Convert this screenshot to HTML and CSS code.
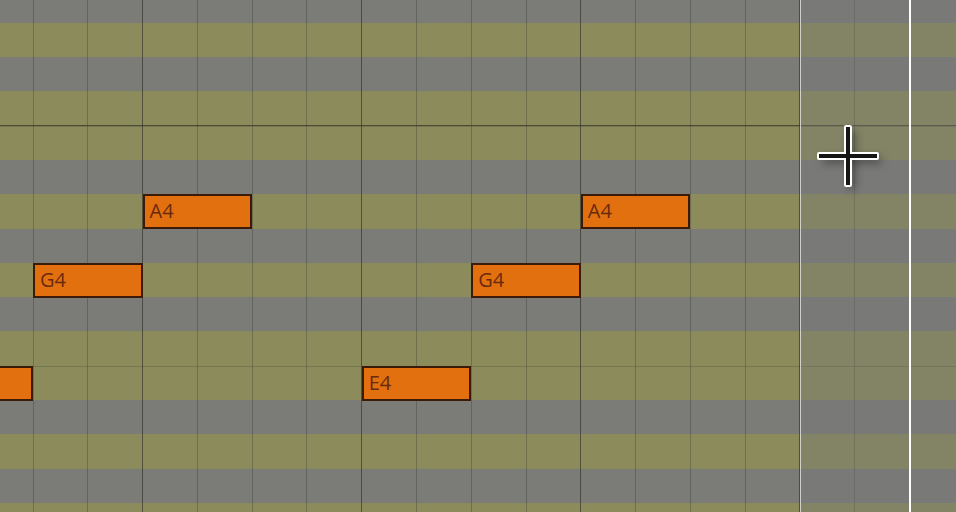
FILE: index.html
```html
<!DOCTYPE html>
<html lang="en">
<head>
    <meta charset="UTF-8">
    <title>Piano roll</title>
    <link rel="stylesheet" href="styles.css">
</head>
<body>
<div class="roll">
    <div class="rows">
        <div class="row black"></div>
        <div class="row white"></div>
        <div class="row black"></div>
        <div class="row white octave"></div>
        <div class="row white"></div>
        <div class="row black"></div>
        <div class="row white"></div>
        <div class="row black"></div>
        <div class="row white"></div>
        <div class="row black"></div>
        <div class="row white"></div>
        <div class="row white"></div>
        <div class="row black"></div>
        <div class="row white"></div>
        <div class="row black"></div>
        <div class="row white"></div>
    </div>
    <div class="grid"></div>

    <!-- notes: left = 33 + step * 54.78, top = row * 34.286 - 11.43 -->
    <div class="note" style="left:-76.56px; top:365.71px;">E4</div>
    <div class="note" style="left:33px; top:262.86px;">G4</div>
    <div class="note" style="left:142.56px; top:194.29px;">A4</div>
    <div class="note" style="left:361.68px; top:365.71px;">E4</div>
    <div class="note" style="left:471.24px; top:262.86px;">G4</div>
    <div class="note" style="left:580.8px; top:194.29px;">A4</div>

    <div class="outside"></div>
    <div class="playhead"></div>

    <svg class="cursor" width="68" height="68" viewBox="0 0 68 68">
        <g class="shadow">
            <rect x="35" y="9" width="6" height="58"/>
            <rect x="9" y="35" width="58" height="6"/>
        </g>
        <g fill="#fff" stroke="#fff" stroke-width="4" stroke-linejoin="round">
            <rect x="32" y="5" width="4" height="58"/>
            <rect x="5" y="32" width="58" height="4"/>
        </g>
        <g fill="#161616">
            <rect x="32" y="5" width="4" height="58"/>
            <rect x="5" y="32" width="58" height="4"/>
        </g>
    </svg>
</div>
</body>
</html>
```

FILE: styles.css
```css
*{margin: 0; padding: 0; box-sizing: border-box;}
body{
    background: #7b7b78;
    overflow: hidden;
}
.roll{
    width: 956px;
    height: 512px;
    position: relative;
    overflow: hidden;
    background: #7b7b78;
}
.rows{
    display: flex;
    flex-direction: column;
    margin-top: -11.43px;
}
.row{
    height: 34.286px;
    flex: none;
}
.row.white{ background: #8c8b5c; }
.row.black{ background: #7b7b78; }
.row.octave{ border-bottom: 1px solid #4b4a34; }
.row.white + .row.white{ box-shadow: inset 0 1px 0 rgba(70, 70, 50, 0.3); }

.grid{
    position: absolute;
    left: 0;
    top: 0;
    width: 100%;
    height: 100%;
    background:
        repeating-linear-gradient(to right,
            transparent 0, transparent 142.1px,
            rgba(50, 50, 40, 0.5) 142.1px, rgba(50, 50, 40, 0.5) 143.1px,
            transparent 143.1px, transparent 219.12px),
        repeating-linear-gradient(to right,
            transparent 0, transparent 32.5px,
            rgba(60, 60, 50, 0.36) 32.5px, rgba(60, 60, 50, 0.36) 33.5px,
            transparent 33.5px, transparent 54.78px);
}

.note{
    position: absolute;
    width: 109.56px;
    height: 35px;
    background: #e3700f;
    border: 2px solid #3c1a0a;
    color: #6a2a0e;
    font-family: "Open Sans", "Liberation Sans", sans-serif;
    font-size: 20px;
    line-height: 30px;
    padding-left: 5px;
    white-space: nowrap;
}

.outside{
    position: absolute;
    left: 800px;
    top: 0;
    width: 156px;
    height: 100%;
    background: rgba(118, 118, 118, 0.38);
    border-left: 1px solid rgba(235, 235, 235, 0.75);
}
.playhead{
    position: absolute;
    left: 909px;
    top: 0;
    width: 2px;
    height: 100%;
    background: #fff;
}

.cursor{
    position: absolute;
    left: 814px;
    top: 122px;
    overflow: visible;
}
.cursor .shadow{
    fill: rgba(35, 35, 35, 0.6);
    filter: blur(4px);
}
```
